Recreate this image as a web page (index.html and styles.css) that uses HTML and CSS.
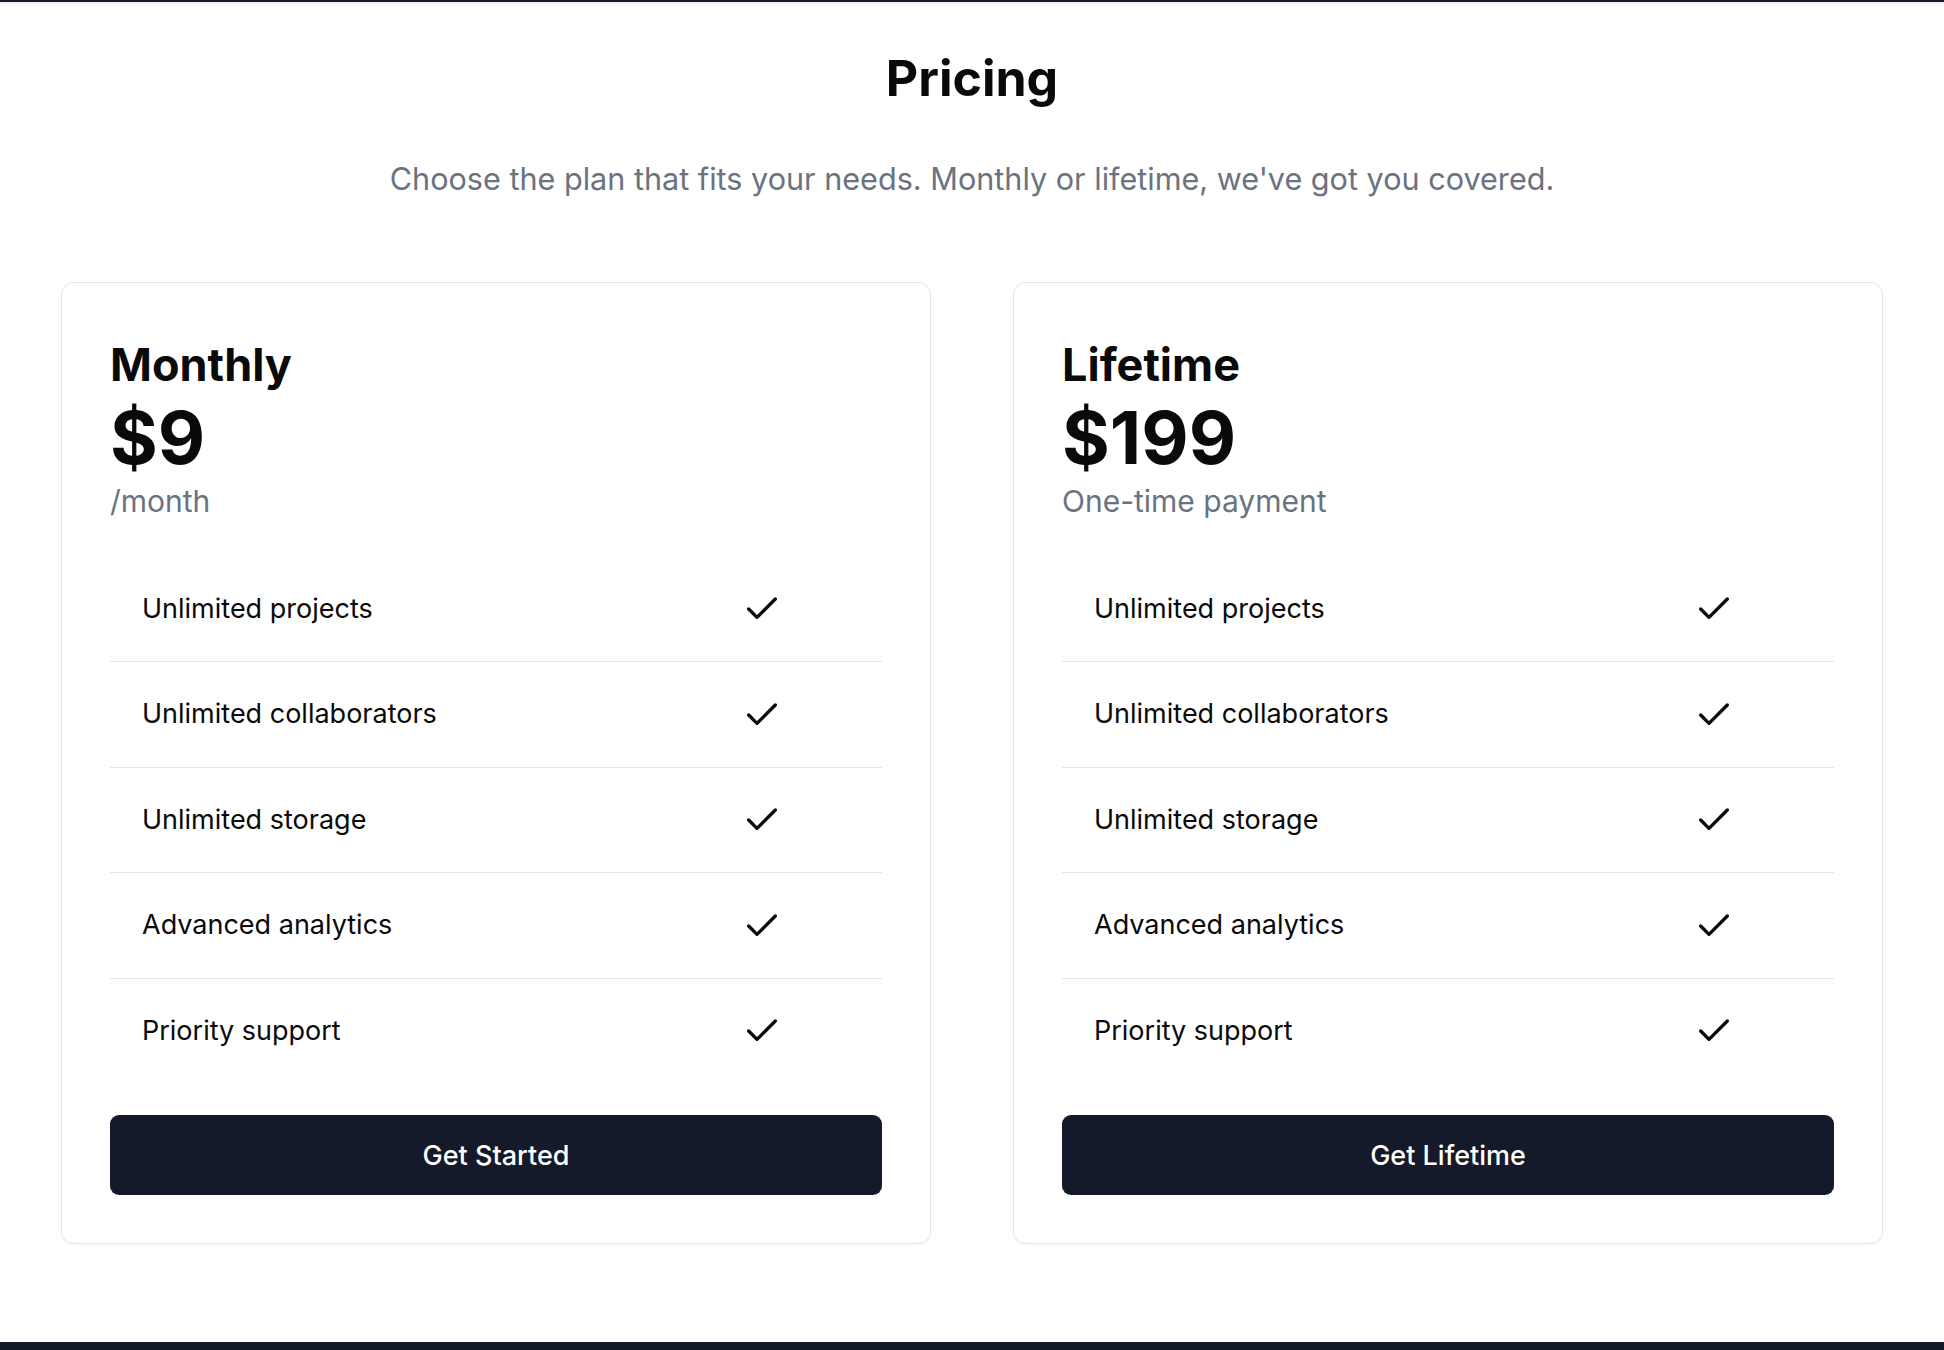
FILE: index.html
```html
<!DOCTYPE html>
<html lang="en">
<head>
<meta charset="utf-8">
<title>Pricing</title>
<link rel="stylesheet" href="styles.css">
</head>
<body>
<div class="topline"></div>
<main class="pricing">
  <h1 class="title">Pricing</h1>
  <p class="subtitle">Choose the plan that fits your needs. Monthly or lifetime, we've got you covered.</p>
  <div class="plans">
    <section class="card">
      <h2 class="plan-name">Monthly</h2>
      <div class="price">$9</div>
      <div class="period">/month</div>
      <ul class="features">
        <li class="feature"><span>Unlimited projects</span><svg class="check" viewBox="0 0 24 24"><path d="M20 6 9 17l-5-5"/></svg></li>
        <li class="feature"><span>Unlimited collaborators</span><svg class="check" viewBox="0 0 24 24"><path d="M20 6 9 17l-5-5"/></svg></li>
        <li class="feature"><span>Unlimited storage</span><svg class="check" viewBox="0 0 24 24"><path d="M20 6 9 17l-5-5"/></svg></li>
        <li class="feature"><span>Advanced analytics</span><svg class="check" viewBox="0 0 24 24"><path d="M20 6 9 17l-5-5"/></svg></li>
        <li class="feature"><span>Priority support</span><svg class="check" viewBox="0 0 24 24"><path d="M20 6 9 17l-5-5"/></svg></li>
      </ul>
      <button class="cta">Get Started</button>
    </section>
    <section class="card">
      <h2 class="plan-name">Lifetime</h2>
      <div class="price">$199</div>
      <div class="period">One-time payment</div>
      <ul class="features">
        <li class="feature"><span>Unlimited projects</span><svg class="check" viewBox="0 0 24 24"><path d="M20 6 9 17l-5-5"/></svg></li>
        <li class="feature"><span>Unlimited collaborators</span><svg class="check" viewBox="0 0 24 24"><path d="M20 6 9 17l-5-5"/></svg></li>
        <li class="feature"><span>Unlimited storage</span><svg class="check" viewBox="0 0 24 24"><path d="M20 6 9 17l-5-5"/></svg></li>
        <li class="feature"><span>Advanced analytics</span><svg class="check" viewBox="0 0 24 24"><path d="M20 6 9 17l-5-5"/></svg></li>
        <li class="feature"><span>Priority support</span><svg class="check" viewBox="0 0 24 24"><path d="M20 6 9 17l-5-5"/></svg></li>
      </ul>
      <button class="cta">Get Lifetime</button>
    </section>
  </div>
</main>
<footer class="footer"></footer>
</body>
</html>
```

FILE: styles.css
```css
* { box-sizing: border-box; }

body {
  margin: 0;
  background: #ffffff;
  color: #0a0a0a;
  font-family: Inter, "Noto Sans", "Liberation Sans", sans-serif;
}

.topline {
  height: 4px;
  background: #f1f1f3;
  border-top: 2px solid #161b29;
}

.pricing {
  padding: 48.5px 61px 98px;
}

.title {
  margin: 0;
  text-align: center;
  font-size: 50px;
  line-height: 50px;
  font-weight: 700;
  color: #0a0a0a;
}

.subtitle {
  margin: 53px 0 0;
  text-align: center;
  font-size: 30.6px;
  line-height: 45px;
  color: #6b7280;
}

.plans {
  margin-top: 81.9px;
  display: grid;
  grid-template-columns: 1fr 1fr;
  gap: 82px;
}

.card {
  border: 1px solid #e5e7eb;
  border-radius: 13px;
  padding: 48px;
  background: #fff;
  box-shadow: 0 1px 3px rgba(0, 0, 0, 0.05);
}

.plan-name {
  margin: 7px 0 0;
  font-size: 45px;
  line-height: 54px;
  font-weight: 700;
}

.price {
  margin-top: 10px;
  font-size: 73px;
  line-height: 72px;
  font-weight: 700;
}

.period {
  margin-top: 4.3px;
  font-size: 30px;
  line-height: 45px;
  color: #6b7280;
}

.features {
  list-style: none;
  margin: 33.2px 0 0;
  padding: 0;
}

.feature {
  display: grid;
  grid-template-columns: 1fr 40px;
  align-items: center;
  padding: 32px 100px 32px 32px;
  font-size: 27px;
  line-height: 40.5px;
  color: #0a0a0a;
  border-bottom: 1px solid #e5e7eb;
}

.feature:last-child {
  border-bottom: none;
}

.check {
  width: 40px;
  height: 40px;
  fill: none;
  stroke: #0a0a0a;
  stroke-width: 2;
  stroke-linecap: round;
  stroke-linejoin: round;
}

.cta {
  display: block;
  width: 100%;
  height: 80px;
  margin-top: 32px;
  border: none;
  border-radius: 9px;
  background: #141a2a;
  color: #ffffff;
  font-family: inherit;
  font-size: 27px;
  font-weight: 500;
}

.footer {
  height: 120px;
  background: #111827;
}
```
